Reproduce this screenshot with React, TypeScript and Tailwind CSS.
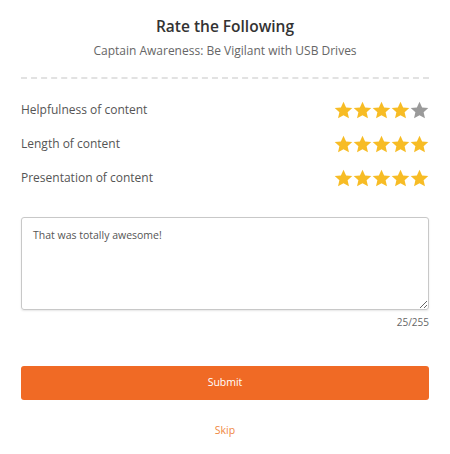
import { useState } from 'react'

const Star = ({ filled }: { filled: boolean }) => (
  <svg
    viewBox="0 0 24 24"
    className={filled ? 'w-[19px] h-[19px] fill-[#f7bc25]' : 'w-[19px] h-[19px] fill-[#9a9a9a]'}>
    <path d="M12 1l3.3 7.1 7.8.8-5.9 5.3 1.7 7.7L12 18l-6.9 3.9 1.7-7.7L.9 8.9l7.8-.8z" />
  </svg>
)

const Rating = ({ value }: { value: number }) => (
  <div className="flex">
    {[1, 2, 3, 4, 5].map((i) => (
      <Star key={i} filled={i <= value} />
    ))}
  </div>
)

const ratings = [
  { label: 'Helpfulness of content', value: 4 },
  { label: 'Length of content', value: 5 },
  { label: 'Presentation of content', value: 5 }
]

const App = () => {
  const [comment, setComment] = useState('That was totally awesome!')

  return (
    <div
      className="w-[450px] h-[454px] bg-white px-[21px] pt-[14px] text-[#555]"
      style={{ fontFamily: '"Open Sans", sans-serif' }}>
      <h1 className="text-center text-[15.5px] font-semibold text-[#333] leading-6">
        Rate the Following
      </h1>
      <p className="text-center text-[12px] text-[#666] mt-[3px] leading-5">
        Captain Awareness: Be Vigilant with USB Drives
      </p>
      <div className="border-t-2 border-dashed border-[#e2e2e2] mt-[16px]" />
      <div className="flex flex-col gap-[14px] mt-[21px]">
        {ratings.map((r) => (
          <div key={r.label} className="flex items-center justify-between h-5">
            <span className="text-[12px] text-[#555]">{r.label}</span>
            <Rating value={r.value} />
          </div>
        ))}
      </div>
      <textarea
        value={comment}
        onChange={(e) => setComment(e.target.value)}
        maxLength={255}
        className="block w-full h-[93px] mt-[29px] border border-[#c8c8c8] rounded-[3px] px-[11px] py-[9px] text-[10.5px] leading-4 text-[#555] shadow-[0_1px_2px_rgba(0,0,0,0.1)] outline-none"
      />
      <div className="text-right text-[10px] text-[#666] mt-[4px] leading-4">
        {comment.length}/255
      </div>
      <button
        type="submit"
        className="block w-full h-[34px] mt-[36px] bg-[#f06a25] rounded-[3px] text-white text-[10.5px]">
        Submit
      </button>
      <div className="text-center mt-[20px] leading-4">
        <a href="#" className="text-[10.5px] text-[#f0883f]">
          Skip
        </a>
      </div>
    </div>
  )
}

export default App
